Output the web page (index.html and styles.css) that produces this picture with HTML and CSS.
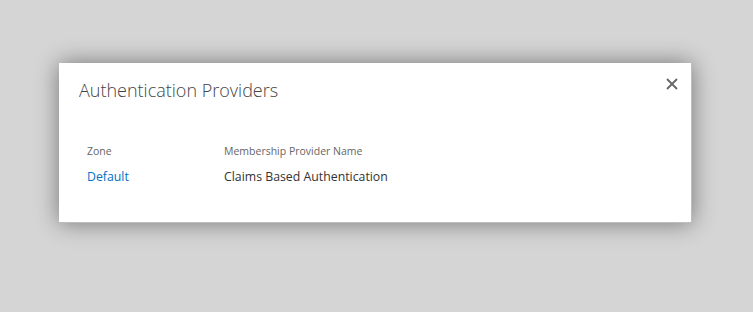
FILE: index.html
```html
<!DOCTYPE html>
<html>
<head>
<meta charset="utf-8">
<link rel="stylesheet" href="styles.css">
</head>
<body>
<div class="page">
  <div class="dialog">
    <div class="dialog-head">
      <h1 class="title">Authentication Providers</h1>
      <button class="close" aria-label="Close">
        <svg width="12" height="12" viewBox="0 0 12 12"><path d="M1 1 L11 11 M11 1 L1 11" stroke="#666" stroke-width="1.8" fill="none"/></svg>
      </button>
    </div>
    <table class="grid">
      <thead>
        <tr><th class="c1">Zone</th><th>Membership Provider Name</th></tr>
      </thead>
      <tbody>
        <tr><td class="c1"><a href="#" class="link">Default</a></td><td>Claims Based Authentication</td></tr>
      </tbody>
    </table>
  </div>
</div>
</body>
</html>
```
FILE: styles.css
```css
html, body { margin: 0; padding: 0; }
body {
  background: #d5d5d5;
  width: 753px;
  height: 312px;
  overflow: hidden;
  font-family: "Open Sans", "Noto Sans", sans-serif;
}
.page {
  padding: 63px 0 0 59px;
}
.dialog {
  width: 633px;
  height: 160px;
  box-sizing: border-box;
  background: #fff;
  border-right: 1px solid #bdbdbd;
  border-bottom: 1px solid #bdbdbd;
  box-shadow: 0 0 22px rgba(0,0,0,0.45);
  padding: 14px 0 0 20px;
}
.dialog-head {
  display: flex;
  justify-content: space-between;
  align-items: flex-start;
}
.title {
  margin: 0;
  font-weight: 300;
  font-size: 18px;
  line-height: 26px;
  color: #444;
}
.close {
  border: 0;
  background: none;
  padding: 0;
  margin: 1px 13px 0 0;
  width: 12px;
  height: 12px;
  display: block;
}
.close svg { display: block; }
.grid {
  border-collapse: collapse;
  margin: 39px 0 0 8px;
}
.grid th {
  text-align: left;
  font-weight: 400;
  font-size: 10.5px;
  color: #666;
  padding: 0;
  height: 18px;
}
.grid td {
  font-size: 12.3px;
  color: #333;
  padding: 0;
  height: 32px;
  vertical-align: top;
  padding-top: 8px;
}
.grid .c1 { width: 137px; }
.link { color: #0072c6; text-decoration: none; }
```
